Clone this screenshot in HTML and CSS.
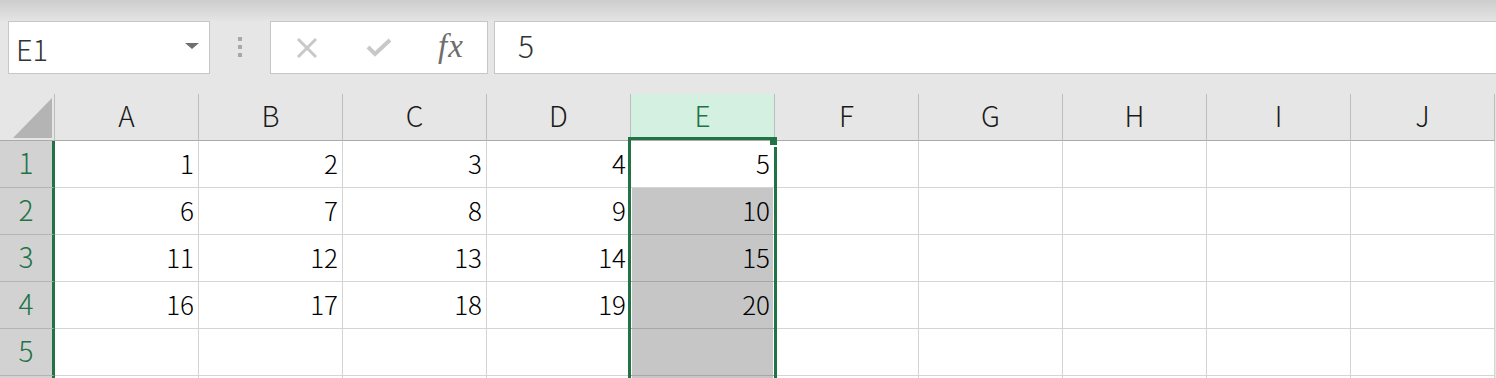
FILE: index.html
```html
<!DOCTYPE html>
<html lang="ja">
<head>
    <meta charset="UTF-8">
    <title>Book1 - Excel</title>
    <link rel="stylesheet" href="styles.css">
</head>
<body>
    <div class="title-strip"></div>

    <div class="formula-bar">
        <div class="name-box">
            <span class="name-text">E1</span>
            <span class="caret"></span>
        </div>
        <div class="grip"><i></i><i></i><i></i></div>
        <div class="fx-buttons">
            <span class="fx-slot">
                <svg width="22" height="22" viewBox="0 0 22 22">
                    <path d="M2 2 L20 20 M20 2 L2 20" stroke="#c8c8c8" stroke-width="3" fill="none"/>
                </svg>
            </span>
            <span class="fx-slot">
                <svg width="26" height="19" viewBox="0 0 26 19">
                    <path d="M2 9 L9 16 L24 2" stroke="#c8c8c8" stroke-width="4" fill="none"/>
                </svg>
            </span>
            <span class="fx-slot fx-label">fx</span>
        </div>
        <div class="formula-input">5</div>
    </div>

    <div class="sheet">
        <div class="grid">
            <div class="corner"></div>
            <div class="col-head">A</div>
            <div class="col-head">B</div>
            <div class="col-head">C</div>
            <div class="col-head">D</div>
            <div class="col-head active">E</div>
            <div class="col-head">F</div>
            <div class="col-head">G</div>
            <div class="col-head">H</div>
            <div class="col-head">I</div>
            <div class="col-head">J</div>

            <div class="row-head">1</div>
            <div class="cell">1</div>
            <div class="cell">2</div>
            <div class="cell">3</div>
            <div class="cell">4</div>
            <div class="cell">5</div>
            <div class="cell"></div>
            <div class="cell"></div>
            <div class="cell"></div>
            <div class="cell"></div>
            <div class="cell"></div>

            <div class="row-head">2</div>
            <div class="cell">6</div>
            <div class="cell">7</div>
            <div class="cell">8</div>
            <div class="cell">9</div>
            <div class="cell sel">10</div>
            <div class="cell"></div>
            <div class="cell"></div>
            <div class="cell"></div>
            <div class="cell"></div>
            <div class="cell"></div>

            <div class="row-head">3</div>
            <div class="cell">11</div>
            <div class="cell">12</div>
            <div class="cell">13</div>
            <div class="cell">14</div>
            <div class="cell sel">15</div>
            <div class="cell"></div>
            <div class="cell"></div>
            <div class="cell"></div>
            <div class="cell"></div>
            <div class="cell"></div>

            <div class="row-head">4</div>
            <div class="cell">16</div>
            <div class="cell">17</div>
            <div class="cell">18</div>
            <div class="cell">19</div>
            <div class="cell sel">20</div>
            <div class="cell"></div>
            <div class="cell"></div>
            <div class="cell"></div>
            <div class="cell"></div>
            <div class="cell"></div>

            <div class="row-head">5</div>
            <div class="cell"></div>
            <div class="cell"></div>
            <div class="cell"></div>
            <div class="cell"></div>
            <div class="cell sel"></div>
            <div class="cell"></div>
            <div class="cell"></div>
            <div class="cell"></div>
            <div class="cell"></div>
            <div class="cell"></div>

            <!-- row 6 is only a sliver at the bottom edge -->
            <div class="row-head"></div>
            <div class="cell"></div>
            <div class="cell"></div>
            <div class="cell"></div>
            <div class="cell"></div>
            <div class="cell sel"></div>
            <div class="cell"></div>
            <div class="cell"></div>
            <div class="cell"></div>
            <div class="cell"></div>
            <div class="cell"></div>
        </div>

        <!-- column E selection outline -->
        <div class="selection"><span class="fill-handle"></span></div>
    </div>
</body>
</html>
```

FILE: styles.css
```css
:root {
    --excel-green: #217346;
    --bg-app: #e6e6e6;
    --box-border: #c6c6c6;
    --grid-line: #d4d4d4;
    --head-line: #bdbdbd;
    --head-bottom: #ababab;
    --row-head-bg: #d2d2d2;
    --sel-fill: #c6c6c6;
    --text-dark: #1f1f1f;
}

* {
    box-sizing: border-box;
    margin: 0;
    padding: 0;
}

body {
    background: var(--bg-app);
    font-family: "Noto Sans CJK JP", "Liberation Sans", sans-serif;
    font-weight: 300;
    color: var(--text-dark);
    height: 378px;
    overflow: hidden;
}

.title-strip {
    height: 21px;
    background: linear-gradient(#cdcdcd, #e4e4e4);
}

/* Formula bar */
.formula-bar {
    display: flex;
    height: 53px;
    margin-bottom: 20px;
}

.name-box {
    margin-left: 8px;
    width: 202px;
    background: #fff;
    border: 1px solid var(--box-border);
    display: flex;
    align-items: center;
    justify-content: space-between;
    padding: 0 10px 0 7px;
    font-size: 29px;
    color: #333;
}

.name-text {
    margin-top: 1px;
}

.caret {
    border-left: 7px solid transparent;
    border-right: 7px solid transparent;
    border-top: 6px solid #6f6f6f;
    margin-bottom: 4px;
}

.grip {
    width: 60px;
    display: flex;
    flex-direction: column;
    align-items: center;
    justify-content: center;
    gap: 4px;
    padding-bottom: 1px;
}

.grip i {
    width: 4px;
    height: 4px;
    background: #a8a8a8;
}

.fx-buttons {
    width: 218px;
    background: #fff;
    border: 1px solid var(--box-border);
    display: flex;
    align-items: center;
}

.fx-slot {
    width: 72px;
    display: flex;
    justify-content: center;
    align-items: center;
}

.fx-label {
    font-family: "Liberation Serif", serif;
    font-style: italic;
    font-weight: 400;
    font-size: 33px;
    color: #6e6e6e;
    letter-spacing: 1px;
    padding-bottom: 2px;
}

.formula-input {
    margin-left: 6px;
    flex: 1;
    background: #fff;
    border: 1px solid var(--box-border);
    border-right: none;
    padding: 0 0 6px 23px;
    display: flex;
    align-items: center;
    font-size: 30px;
    color: #333;
}

/* Sheet */
.sheet {
    position: relative;
}

.grid {
    display: grid;
    grid-template-columns: 55px repeat(10, 144px);
    grid-auto-rows: 47px;
}

.corner {
    border-right: 1px solid var(--head-line);
    border-bottom: 1px solid var(--head-bottom);
    display: flex;
    align-items: flex-end;
    justify-content: flex-end;
    padding: 0 2px 2px 0;
}

.corner::after {
    content: "";
    width: 39px;
    height: 40px;
    background: #b4b4b4;
    clip-path: polygon(100% 0, 100% 100%, 0 100%);
}

.col-head {
    border-right: 1px solid var(--head-line);
    border-bottom: 1px solid var(--head-bottom);
    display: flex;
    align-items: center;
    justify-content: center;
    padding-bottom: 4px;
    font-size: 28px;
    color: #1a1a1a;
}

.col-head.active {
    background: #d3f0e0;
    color: var(--excel-green);
}

.row-head {
    background: var(--row-head-bg);
    border-right: 3px solid var(--excel-green);
    border-bottom: 1px solid #b4b4b4;
    display: flex;
    align-items: center;
    justify-content: center;
    padding-bottom: 4px;
    font-size: 28px;
    color: var(--excel-green);
}

.cell {
    background: #fff;
    border-right: 1px solid var(--grid-line);
    border-bottom: 1px solid var(--grid-line);
    display: flex;
    align-items: center;
    justify-content: flex-end;
    padding: 0 4px 4px 0;
    font-size: 26px;
    color: #000;
}

.cell.sel {
    background: var(--sel-fill);
    border-bottom-color: #a6a6a6;
    box-shadow: inset 1px 0 #fff, inset -1px 0 #fff;
}

.selection {
    position: absolute;
    left: 628px;
    top: 43px;
    width: 149px;
    height: 300px;
    border: 3px solid var(--excel-green);
    border-bottom: none;
    pointer-events: none;
}

.fill-handle {
    position: absolute;
    right: -3px;
    top: -2px;
    width: 7px;
    height: 9px;
    background: var(--excel-green);
    border-bottom: 2px solid #fff;
}
```
